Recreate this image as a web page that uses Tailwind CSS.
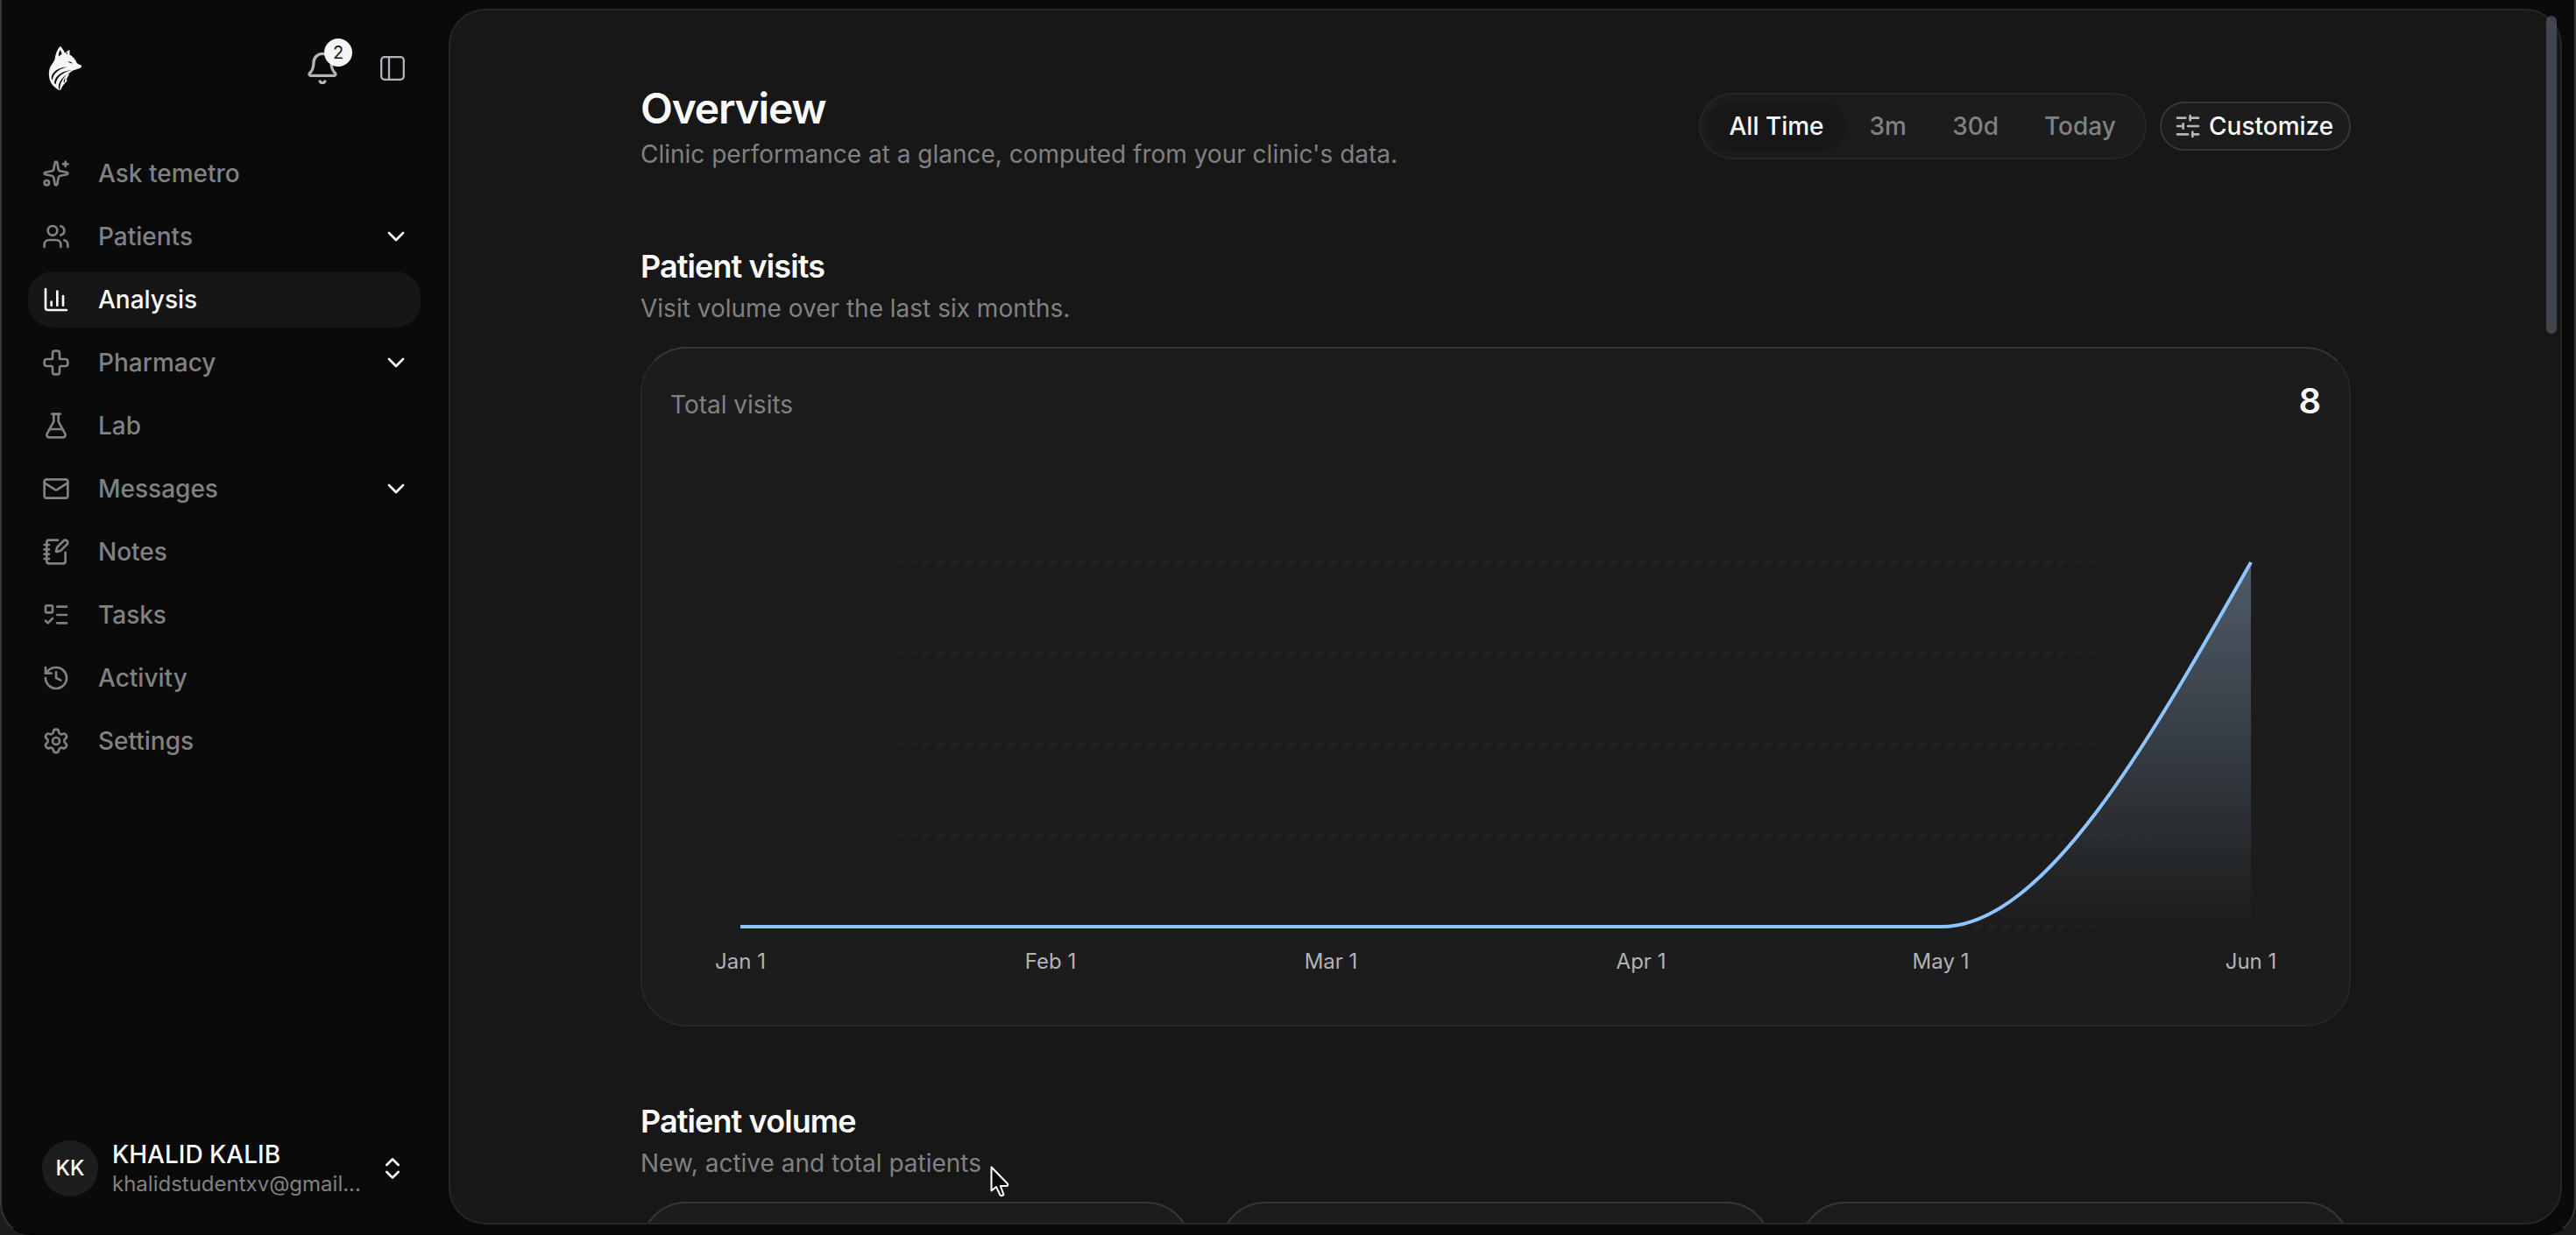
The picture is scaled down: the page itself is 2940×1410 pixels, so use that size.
<!DOCTYPE html>
<html lang="en">
<head>
<meta charset="utf-8">
<title>Overview</title>
<script src="https://cdn.jsdelivr.net/npm/@tailwindcss/browser@4"></script>
</head>
<body class="h-[1410px] w-[2940px] overflow-hidden bg-[#1c1c1e] font-['Inter',sans-serif] text-[28px] leading-[40px] text-[#fafafa] antialiased">
<div class="relative flex h-[1410px] w-[2940px] overflow-hidden rounded-b-[36px] border-x-2 border-b border-x-[#34373b] border-b-black bg-[#0a0a0a] pt-[10px] pr-[14px] pb-[11px]">

  <!-- Sidebar -->
  <aside class="flex w-[510px] shrink-0 flex-col pl-[30px] pr-8">
    <div class="flex h-[136px] items-center pr-4 pl-[8px]">
      <svg class="mb-1 h-[72px] w-16" viewBox="0 0 192 216" fill="none">
        <path fill="#f5f5f5" d="M86 38C92 43 99 53 102 61L106 60C109 56 114 52 118 51C119 57 119 63 118 67C129 73 138 83 143 95C147 99 153 101 159 104C160 109 157 112 153 114C145 116 139 119 131 121C123 126 116 131 111 137L118 133C114 141 109 147 108 153L110 157C101 165 93 175 88 188L81 188C68 180 55 168 51 155C46 140 46 120 54 106C59 97 66 91 68 82C69 68 75 50 86 38Z"/>
        <path fill="#0a0a0a" d="M86 51C89 55 91 60 92 65C88 66 84 70 81 74C80 66 82 58 86 51ZM112 89C118 91 125 93 130 97C122 97 116 94 112 89ZM106 64L112 58L110 66Z"/>
        <path fill="#0a0a0a" d="M57 151C53 131 78 110 113 109C86 114 61 130 60 154ZM66 164C68 141 86 125 128 119C96 127 73 143 71 169ZM82 186C76 166 90 148 110 134C94 150 84 166 85 187ZM99 163C96 156 100 150 105 147C102 153 101 158 102 161Z"/>
      </svg>
      <div class="ml-auto flex items-center gap-[44px]">
        <div class="relative size-10">
          <svg class="size-10 text-[#b4b5b7]" viewBox="0 0 24 24" fill="none" stroke="currentColor" stroke-width="2" stroke-linecap="round" stroke-linejoin="round"><path d="M10.268 21a2 2 0 0 0 3.464 0"/><path d="M3.262 15.326A1 1 0 0 0 4 17h16a1 1 0 0 0 .74-1.673C19.410 13.956 18 12.499 18 8A6 6 0 0 0 6 8c0 4.499-1.411 5.956-2.738 7.326"/></svg>
          <span class="absolute -top-[14px] left-[22px] flex size-8 items-center justify-center rounded-full bg-[#f5f5f5] text-[20px] leading-none font-normal text-[#171717]">2</span>
        </div>
        <svg class="size-8 text-[#b0b4b9]" viewBox="0 0 32 32" fill="none" stroke="currentColor" stroke-width="2.300"><rect x="3.200" y="3.200" width="25.600" height="25.600" rx="3.500"/><path d="M12 3.200v25.600"/></svg>
      </div>
    </div>

    <nav class="mt-5 flex flex-col gap-2 font-medium text-[#808182]">
      <a class="flex h-16 items-center gap-8 rounded-[28px] px-4"><svg class="size-8" viewBox="0 0 24 24" fill="none" stroke="currentColor" stroke-width="2" stroke-linecap="round" stroke-linejoin="round"><path d="M11.017 2.814a1 1 0 0 1 1.966 0l1.051 5.558a2 2 0 0 0 1.594 1.594l5.558 1.051a1 1 0 0 1 0 1.966l-5.558 1.051a2 2 0 0 0-1.594 1.594l-1.051 5.558a1 1 0 0 1-1.966 0l-1.051-5.558a2 2 0 0 0-1.594-1.594l-5.558-1.051a1 1 0 0 1 0-1.966l5.558-1.051a2 2 0 0 0 1.594-1.594z"/><path d="M20 2v4"/><path d="M22 4h-4"/><circle cx="4" cy="20" r="2"/></svg><span>Ask temetro</span></a>
      <a class="flex h-16 items-center gap-8 rounded-[28px] px-4"><svg class="size-8" viewBox="0 0 24 24" fill="none" stroke="currentColor" stroke-width="2" stroke-linecap="round" stroke-linejoin="round"><path d="M16 21v-2a4 4 0 0 0-4-4H6a4 4 0 0 0-4 4v2"/><path d="M16 3.128a4 4 0 0 1 0 7.744"/><path d="M22 21v-2a4 4 0 0 0-3-3.870"/><circle cx="9" cy="7" r="4"/></svg><span>Patients</span><svg class="-mr-1 ml-auto size-8 text-white" viewBox="0 0 24 24" fill="none" stroke="currentColor" stroke-width="2" stroke-linecap="round" stroke-linejoin="round"><path d="m6 9 6 6 6-6"/></svg></a>
      <a class="flex h-16 items-center gap-8 rounded-[28px] bg-[#161616] px-4 text-[#fafafa]"><svg class="size-8" viewBox="0 0 24 24" fill="none" stroke="currentColor" stroke-width="2" stroke-linecap="round" stroke-linejoin="round"><path d="M3 3v16a2 2 0 0 0 2 2h16"/><path d="M18 17V9"/><path d="M13 17V5"/><path d="M8 17v-3"/></svg><span>Analysis</span></a>
      <a class="flex h-16 items-center gap-8 rounded-[28px] px-4"><svg class="size-8" viewBox="0 0 24 24" fill="none" stroke="currentColor" stroke-width="2" stroke-linecap="round" stroke-linejoin="round"><path d="M4 9a2 2 0 0 0-2 2v2a2 2 0 0 0 2 2h4a1 1 0 0 1 1 1v4a2 2 0 0 0 2 2h2a2 2 0 0 0 2-2v-4a1 1 0 0 1 1-1h4a2 2 0 0 0 2-2v-2a2 2 0 0 0-2-2h-4a1 1 0 0 1-1-1V4a2 2 0 0 0-2-2h-2a2 2 0 0 0-2 2v4a1 1 0 0 1-1 1z"/></svg><span>Pharmacy</span><svg class="-mr-1 ml-auto size-8 text-white" viewBox="0 0 24 24" fill="none" stroke="currentColor" stroke-width="2" stroke-linecap="round" stroke-linejoin="round"><path d="m6 9 6 6 6-6"/></svg></a>
      <a class="flex h-16 items-center gap-8 rounded-[28px] px-4"><svg class="size-8" viewBox="0 0 24 24" fill="none" stroke="currentColor" stroke-width="2" stroke-linecap="round" stroke-linejoin="round"><path d="M14 2v6a2 2 0 0 0 .245.960l5.510 10.080A2 2 0 0 1 18 22H6a2 2 0 0 1-1.755-2.960l5.510-10.080A2 2 0 0 0 10 8V2"/><path d="M6.453 15h11.094"/><path d="M8.500 2h7"/></svg><span>Lab</span></a>
      <a class="flex h-16 items-center gap-8 rounded-[28px] px-4"><svg class="size-8" viewBox="0 0 24 24" fill="none" stroke="currentColor" stroke-width="2" stroke-linecap="round" stroke-linejoin="round"><path d="m22 7-8.991 5.727a2 2 0 0 1-2.009 0L2 7"/><rect x="2" y="4" width="20" height="16" rx="2"/></svg><span>Messages</span><svg class="-mr-1 ml-auto size-8 text-white" viewBox="0 0 24 24" fill="none" stroke="currentColor" stroke-width="2" stroke-linecap="round" stroke-linejoin="round"><path d="m6 9 6 6 6-6"/></svg></a>
      <a class="flex h-16 items-center gap-8 rounded-[28px] px-4"><svg class="size-8" viewBox="0 0 24 24" fill="none" stroke="currentColor" stroke-width="2" stroke-linecap="round" stroke-linejoin="round"><path d="M13.400 2H6a2 2 0 0 0-2 2v16a2 2 0 0 0 2 2h12a2 2 0 0 0 2-2v-7.400"/><path d="M2 6h4"/><path d="M2 10h4"/><path d="M2 14h4"/><path d="M2 18h4"/><path d="M21.378 5.626a1 1 0 1 0-3.004-3.004l-5.010 5.012a2 2 0 0 0-.506.854l-.837 2.870a.5.5 0 0 0 .620.620l2.870-.837a2 2 0 0 0 .854-.506z"/></svg><span>Notes</span></a>
      <a class="flex h-16 items-center gap-8 rounded-[28px] px-4"><svg class="size-8" viewBox="0 0 24 24" fill="none" stroke="currentColor" stroke-width="2" stroke-linecap="round" stroke-linejoin="round"><path d="M13 5h8"/><path d="M13 12h8"/><path d="M13 19h8"/><path d="m3 17 2 2 4-4"/><rect x="3" y="4" width="6" height="6" rx="1"/></svg><span>Tasks</span></a>
      <a class="flex h-16 items-center gap-8 rounded-[28px] px-4"><svg class="size-8" viewBox="0 0 24 24" fill="none" stroke="currentColor" stroke-width="2" stroke-linecap="round" stroke-linejoin="round"><path d="M3 12a9 9 0 1 0 9-9 9.750 9.750 0 0 0-6.740 2.740L3 8"/><path d="M3 3v5h5"/><path d="M12 7v5l4 2"/></svg><span>Activity</span></a>
      <a class="flex h-16 items-center gap-8 rounded-[28px] px-4"><svg class="size-8" viewBox="0 0 24 24" fill="none" stroke="currentColor" stroke-width="2" stroke-linecap="round" stroke-linejoin="round"><path d="M9.671 4.136a2.340 2.340 0 0 1 4.659 0 2.340 2.340 0 0 0 3.319 1.915 2.340 2.340 0 0 1 2.330 4.033 2.340 2.340 0 0 0 0 3.831 2.340 2.340 0 0 1-2.330 4.033 2.340 2.340 0 0 0-3.319 1.915 2.340 2.340 0 0 1-4.659 0 2.340 2.340 0 0 0-3.320-1.915 2.340 2.340 0 0 1-2.330-4.033 2.340 2.340 0 0 0 0-3.831A2.340 2.340 0 0 1 6.350 6.051a2.340 2.340 0 0 0 3.319-1.915"/><circle cx="12" cy="12" r="3"/></svg><span>Settings</span></a>
    </nav>

    <div class="mt-auto mb-8 flex h-16 items-center gap-4 pr-4 pl-4">
      <div class="flex size-16 items-center justify-center rounded-full bg-[#1d1d1d] text-[24px] font-medium">KK</div>
      <div class="flex w-[288px] flex-col">
        <span class="text-[28px] leading-[36px] font-medium">KHALID KALIB</span>
        <span class="truncate text-[24px] leading-[32px] text-[#808182]">khalidstudentxv@gmail...</span>
      </div>
      <svg class="ml-auto size-8 shrink-0 text-white" viewBox="0 0 24 24" fill="none" stroke="currentColor" stroke-width="2" stroke-linecap="round" stroke-linejoin="round"><path d="m7 15 5 5 5-5"/><path d="m7 9 5-5 5 5"/></svg>
    </div>
  </aside>

  <!-- Content panel -->
  <main class="h-[1388px] w-[2412px] shrink-0 overflow-hidden rounded-[42px] border-2 border-[#262626] bg-[#171717] pl-[217px]">
    <div class="w-[1952px]">
      <header class="flex h-[252px] items-start justify-between pt-[82px]">
        <div>
          <h1 class="text-[48px] leading-[60px] font-semibold tracking-[-0.025em]">Overview</h1>
          <p class="mt-[2px] text-[#808182]">Clinic performance at a glance, computed from your clinic's data.</p>
        </div>
        <div class="mt-3 flex items-center gap-[15px] font-medium">
          <div class="flex h-[76px] w-[511px] items-center gap-[2px] rounded-[38px] border-2 border-[#262626] bg-[#1c1c1c] px-2 text-[#808182]">
            <button class="h-14 w-[158px] rounded-[28px] bg-[#171717] text-[#fafafa] shadow-[0_2px_4px_#00000020]">All Time</button>
            <button class="h-14 w-[94px]">3m</button>
            <button class="h-14 w-[103px]">30d</button>
            <button class="h-14 w-[133px]">Today</button>
          </div>
          <button class="flex h-14 w-[218px] items-center justify-start gap-2 rounded-[28px] border-2 border-[#34373b] bg-[#1c1c1c] pl-[14px]">
            <svg class="size-8 shrink-0 text-[#b4b5b7]" viewBox="0 0 24 24" fill="none" stroke="currentColor" stroke-width="2" stroke-linecap="round" stroke-linejoin="round"><path d="M10 5H3"/><path d="M12 19H3"/><path d="M14 3v4"/><path d="M16 17v4"/><path d="M21 12h-9"/><path d="M21 19h-5"/><path d="M21 5h-7"/><path d="M8 10v4"/><path d="M8 12H3"/></svg>
            <span>Customize</span>
          </button>
        </div>
      </header>

      <section class="pt-4">
        <h2 class="text-[36px] leading-[48px] font-semibold tracking-[-0.025em]">Patient visits</h2>
        <p class="mt-1 text-[#808182]">Visit volume over the last six months.</p>
        <div class="mt-6 flex h-[776px] flex-col rounded-[52px] border-2 border-[#262626] border-t-[#34373b] bg-[#1c1c1c] px-8">
          <div class="flex h-[124px] items-start justify-between pt-10">
            <span class="mt-1 text-[#808182]">Total visits</span>
            <span class="text-[40px] leading-[40px] font-semibold">8</span>
          </div>
          <svg class="h-[648px] w-[1884px] shrink-0" viewBox="765 522 1884 648">
            <defs>
              <linearGradient id="area" x1="0" y1="642" x2="0" y2="1058" gradientUnits="userSpaceOnUse"><stop offset="0" stop-color="#9abcde" stop-opacity=".4"/><stop offset="1" stop-color="#9abcde" stop-opacity="0"/></linearGradient>
              <linearGradient id="fade" x1="845" y1="0" x2="2569" y2="0" gradientUnits="userSpaceOnUse"><stop offset="0.030" stop-color="#262626" stop-opacity="0"/><stop offset=".13" stop-color="#262626"/><stop offset=".87" stop-color="#262626"/><stop offset=".97" stop-color="#262626" stop-opacity="0"/></linearGradient>
            </defs>
            <path d="M845 642H2569M845 746H2569M845 850H2569M845 954H2569M845 1058H2569" fill="none" stroke="url(#fade)" stroke-width="2" stroke-dasharray="8 8"/>
            <path d="M2215 1058C2333 1058 2451 850 2569 642V1058Z" fill="url(#area)"/>
            <path d="M845 1058H2215C2333 1058 2451 850 2569 642" fill="none" stroke="#8ec5ff" stroke-width="4"/>
            <g fill="#b2b3b4" font-size="24" text-anchor="middle">
              <text x="845" y="1106">Jan 1</text>
              <text x="1199" y="1106">Feb 1</text>
              <text x="1519" y="1106">Mar 1</text>
              <text x="1873" y="1106">Apr 1</text>
              <text x="2215" y="1106">May 1</text>
              <text x="2569" y="1106">Jun 1</text>
            </g>
          </svg>
        </div>
      </section>

      <section class="pt-[84px]">
        <h2 class="text-[36px] leading-[48px] font-semibold tracking-[-0.025em]">Patient volume</h2>
        <p class="mt-1 text-[#808182]">New, active and total patients</p>
        <div class="mt-6 grid grid-cols-3 gap-8">
          <div class="h-40 rounded-[52px] border-2 border-[#34373b] bg-[#1c1c1c]"></div>
          <div class="h-40 rounded-[52px] border-2 border-[#34373b] bg-[#1c1c1c]"></div>
          <div class="h-40 rounded-[52px] border-2 border-[#34373b] bg-[#1c1c1c]"></div>
        </div>
      </section>
    </div>
  </main>

  <!-- Scrollbar thumb and mouse pointer -->
  <div class="absolute top-[18px] left-[2904px] h-[363px] w-3 rounded-full bg-[#5c6570]/60"></div>
  <svg class="absolute top-[1328px] left-[1126px] h-[42px] w-7" viewBox="0 0 28 42"><path d="M3.500 4.500V31.500L9 27L13.500 36.500Q15.500 38 17.500 36L13.800 26H21.500Q23 24.500 21.500 23Z" fill="#0a0a0a" stroke="#fff" stroke-width="2" stroke-linejoin="round"/></svg>
</div>
</body>
</html>
